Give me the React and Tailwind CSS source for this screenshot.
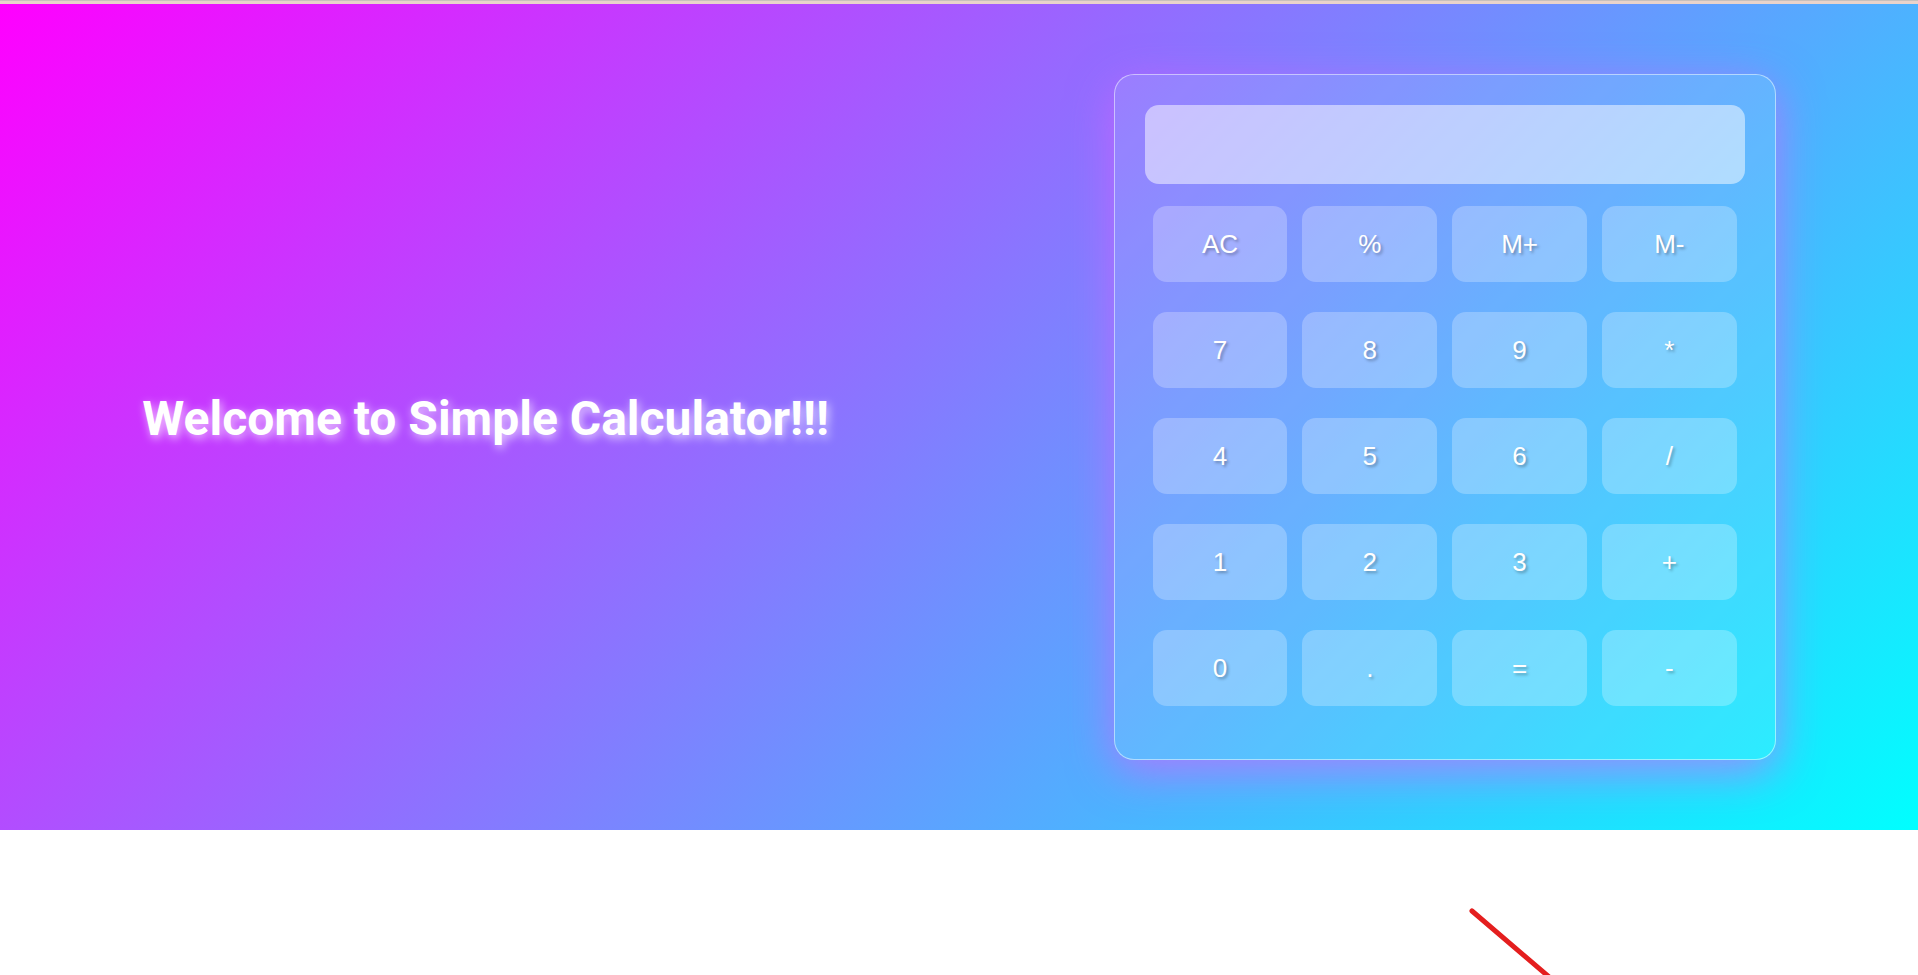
import React from "react";

const keys = ["AC", "%", "M+", "M-", "7", "8", "9", "*", "4", "5", "6", "/", "1", "2", "3", "+", "0", ".", "=", "-"];

export default function App() {
  return (
    <div className="relative w-full h-[975px] overflow-hidden bg-white">
      <div className="h-[1px] bg-[#c8c0bc]" />
      <div className="h-[3px] bg-[#e9d3cb]" />
      <section className="h-[826px] flex items-center justify-around bg-[linear-gradient(135deg,#ff00ff,#00ffff)]">
        <h1
          className="text-[48px] font-bold text-white leading-none mt-[4px]"
          style={{ fontFamily: "Roboto, 'Noto Sans', sans-serif", textShadow: "2px 3px 10px rgba(255,255,255,0.75)" }}
        >
          Welcome to Simple Calculator!!!
        </h1>
        <div className="w-[662px] rounded-[20px] border border-white/50 bg-white/10 p-[30px] pb-[53px] shadow-[0_12px_45px_rgba(225,90,255,0.65)]">
          <div className="h-[79px] rounded-[14px] bg-white/50" />
          <div className="mt-[22px] px-[8px] grid grid-cols-4 gap-x-[15px] gap-y-[30px]">
            {keys.map((k) => (
              <div
                key={k}
                className="h-[76px] rounded-[14px] bg-white/25 flex items-center justify-center text-white text-[26px]"
                style={{ fontFamily: "'Liberation Sans', Arial, sans-serif", textShadow: "2px 2px 3px rgba(0,0,0,0.3)" }}
              >
                {k}
              </div>
            ))}
          </div>
        </div>
      </section>
      <svg className="absolute left-0 top-0 pointer-events-none" width="1918" height="975">
        <line x1="1472" y1="911" x2="1555" y2="982" stroke="#e41e1e" strokeWidth="5" strokeLinecap="round" />
      </svg>
    </div>
  );
}
